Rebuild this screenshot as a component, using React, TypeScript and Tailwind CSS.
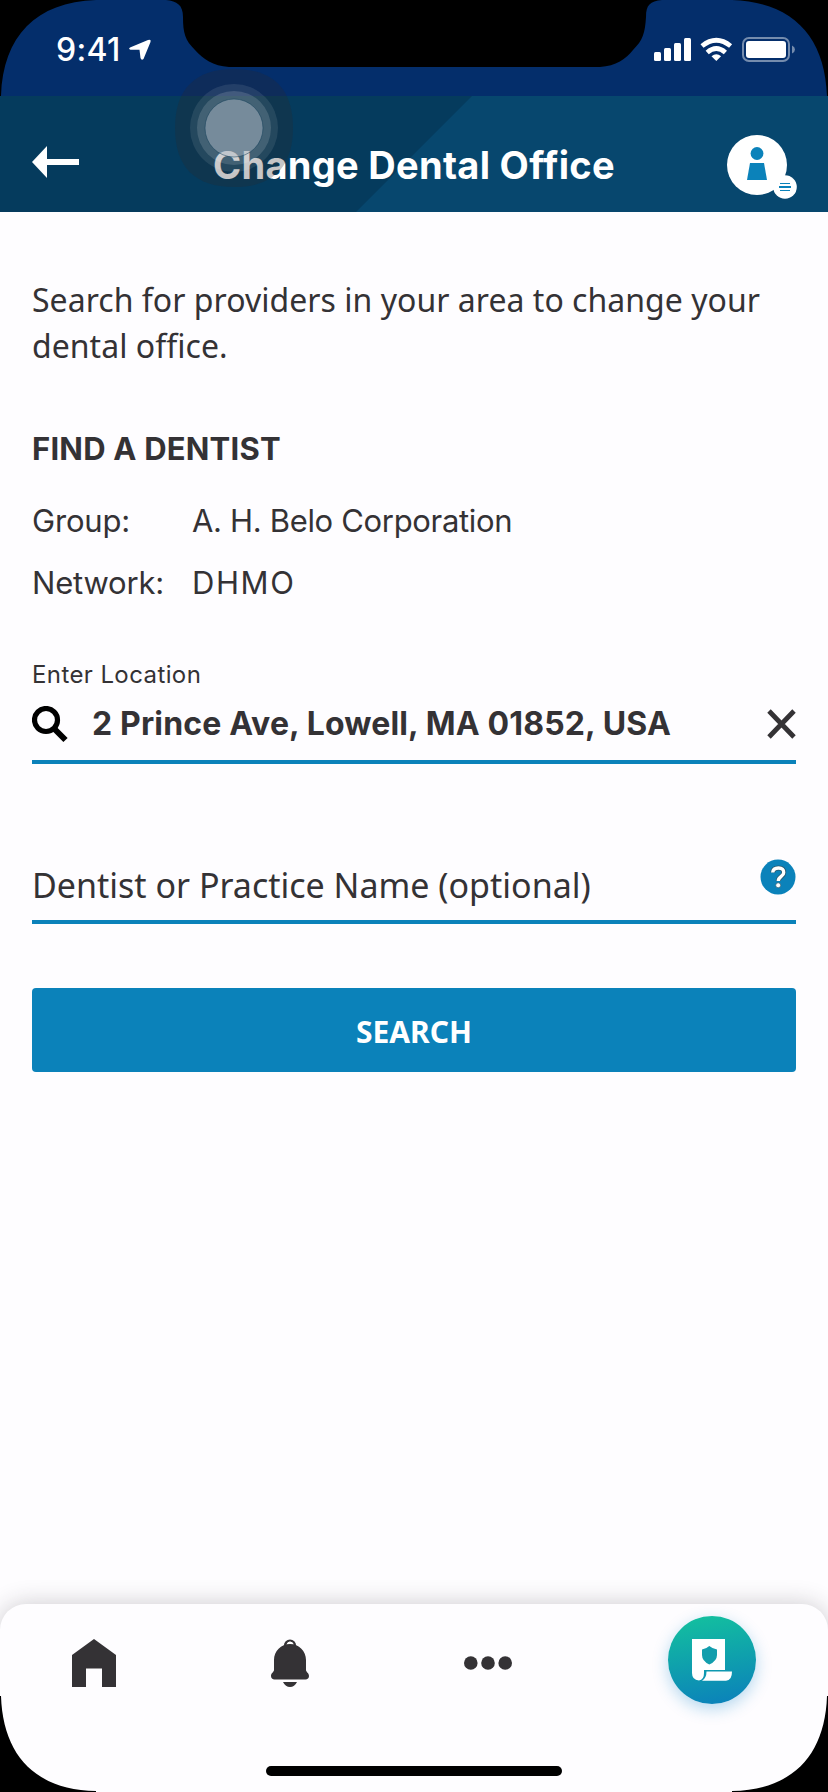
import React from "react";

const circular = "font-[Inter,'Liberation_Sans',sans-serif]";
const noto = "font-['Noto_Sans','Open_Sans',sans-serif]";

function StatusBar() {
  return (
    <div className="relative flex h-24 items-start justify-between bg-[#042e6b] pl-[56px] pr-[33px] text-white">
      <svg className="absolute inset-0" width="828" height="96" viewBox="0 0 828 96" aria-hidden="true">
        <path d="M0 0H96C36 2 3 36 1 96H0Z" fill="#000" />
        <path d="M828 0H732C792 2 825 36 827 96H828Z" fill="#000" />
        <path
          d="M166 0C177 1 183 5 183 17C183 33 185 40 195 50C203 59 213 66 229 67H600C616 66 626 59 633 50C643 40 645 33 646 17C646 5 650 1 662 0Z"
          fill="#000"
        />
      </svg>
      <div className="relative flex pt-[34px]">
        <span className={`${circular} w-[72px] text-[32px] leading-8 font-medium tracking-[0.3px]`}>9:41</span>
        <svg className="mt-[5px]" width="24" height="22" viewBox="0 0 24 22" aria-hidden="true">
          <path d="M2 8.500L20 1Q23.500 0 22.500 3L15.500 20Q13.500 22 12.500 19L11.500 10.700L2.500 10.700Q0 10 2 8.500Z" fill="#fff" />
        </svg>
      </div>
      <div className="relative flex pt-[37px]">
        <svg width="142" height="26" viewBox="0 0 142 26" aria-hidden="true">
          <g fill="#fff">
            <rect x="1" y="15" width="7" height="9" rx="1.500" />
            <rect x="11" y="11" width="7" height="13" rx="1.500" />
            <rect x="21" y="6" width="7" height="18" rx="1.500" />
            <rect x="31" y="1" width="7" height="23" rx="1.500" />
            <path d="M63.300 24L58.500 19.300Q63.300 15.200 68.100 19.300Z" />
          </g>
          <path d="M54.200 15.500Q63.300 7.600 72.400 15.500M49 9Q63.300 -2.500 77.600 9" fill="none" stroke="#fff" strokeWidth="4.800" />
          <rect x="90" y="1" width="46" height="23" rx="6" fill="none" stroke="#fff" strokeOpacity=".45" strokeWidth="2" />
          <rect x="93" y="4" width="40" height="17" rx="3" fill="#fff" />
          <path d="M139 8.500Q142 10 142 12.500T139 16.500Z" fill="#fff" fillOpacity=".45" />
        </svg>
      </div>
    </div>
  );
}

function Header() {
  return (
    <header className="relative flex h-[116px] items-start bg-[#07476e] pr-[31px] pl-8">
      <svg className="absolute inset-0" width="828" height="116" viewBox="0 0 828 116" aria-hidden="true">
        <path d="M0 0H472L356 116H0Z" fill="#053b5d" />
      </svg>
      <svg className="relative mt-[49px]" width="47" height="34" viewBox="0 0 47 34" aria-label="Back">
        <path d="M0 17L15 1V14H47V20H15V33Z" fill="#fff" />
      </svg>
      <h1 className={`${circular} relative mt-[45px] ml-[133px] w-[404px] text-center text-[38px] leading-[48px] font-bold whitespace-nowrap text-white tracking-[0.3px]`}>
        Change Dental Office
      </h1>
      <svg className="relative mt-[38px] ml-auto" width="71" height="66" viewBox="0 0 71 66" aria-label="Profile">
        <circle cx="31" cy="31" r="30" fill="#fff" />
        <circle cx="59" cy="53" r="11.800" fill="#fff" />
        <circle cx="31" cy="19.500" r="6.400" fill="#0b82ba" />
        <path d="M24 29H38L41 46H21Z" fill="#0b82ba" />
        <path d="M53 53H65" stroke="#0b82ba" strokeWidth="2" />
        <path d="M54 49.500H64M54 56.500H64" stroke="#0b82ba" strokeWidth="1" />
      </svg>
      <svg className="absolute left-[174px] top-[-28px]" width="120" height="120" viewBox="0 0 120 120" aria-hidden="true">
        <path d="M60 1C99 1 119 21 119 60S99 119 60 119S1 99 1 60S21 1 60 1Z" fill="#2e2a2c" fillOpacity=".27" />
        <circle cx="60" cy="60" r="44" fill="#fff" fillOpacity=".09" />
        <circle cx="60" cy="60" r="37" fill="#fff" fillOpacity=".14" />
        <circle cx="60" cy="60" r="29" fill="#b0bac8" fillOpacity=".47" stroke="#123e58" strokeOpacity=".5" />
      </svg>
    </header>
  );
}

function Content() {
  return (
    <main className="flex-1 px-8 text-[#343235]">
      <p className={`${noto} pt-[65px] text-[32px] leading-[46px] tracking-[0.03px]`}>
        Search for providers in your area to change your dental office.
      </p>
      <h2 className={`${circular} mt-[57px] text-[31px] leading-[46px] font-bold tracking-[0.2px]`}>FIND A DENTIST</h2>
      <dl className={`${circular} mt-[18px] text-[31px] leading-[40px]`}>
        <div className="flex h-[62px] items-center">
          <dt className="w-[160px] tracking-[-0.2px]">Group:</dt>
          <dd className="tracking-[-0.33px]">A. H. Belo Corporation</dd>
        </div>
        <div className="flex h-[62px] items-center">
          <dt className="w-[160px] tracking-[-0.2px]">Network:</dt>
          <dd className="tracking-[1.6px]">DHMO</dd>
        </div>
      </dl>
      <label className={`${circular} mt-[45px] block text-[24px] leading-8 tracking-[0.4px]`}>Enter Location</label>
      <div className="flex h-[73px] items-center border-b-4 border-[#0b82ba]">
        <svg className="mt-[-2px]" width="36" height="37" viewBox="0 0 36 37" aria-hidden="true">
          <circle cx="14" cy="14" r="11.500" fill="none" stroke="#000" strokeWidth="5.200" />
          <path d="M22 22.500L33.500 34" stroke="#000" strokeWidth="6" />
        </svg>
        <span className={`${circular} mt-[-4px] ml-6 flex-1 text-[32px] leading-10 font-bold whitespace-nowrap tracking-[0.16px]`}>
          2 Prince Ave, Lowell, MA 01852, USA
        </span>
        <svg className="mt-[-3px]" width="29" height="30" viewBox="0 0 29 30" aria-label="Clear">
          <path d="M2 2L27 28M27 2L2 28" stroke="#343235" strokeWidth="4.800" />
        </svg>
      </div>
      <div className="mt-[76px] flex h-[84px] items-center justify-between border-b-4 border-[#0b82ba]">
        <span className={`${noto} mt-[10px] text-[34px] leading-[46px]`}>Dentist or Practice Name (optional)</span>
        <svg className="mt-[-6px]" width="36" height="36" viewBox="0 0 36 36" aria-label="Help">
          <circle cx="18" cy="18" r="17.500" fill="#0b82ba" />
          <path d="M12.700 13.500Q13 9 18.500 9T23.700 13.700C23.700 17.500 18.300 17.500 18.300 22" fill="none" stroke="#28576d" strokeWidth="5" />
          <path d="M12.700 13.500Q13 9 18.500 9T23.700 13.700C23.700 17.500 18.300 17.500 18.300 22" fill="none" stroke="#fff" strokeWidth="3.400" />
          <circle cx="18.200" cy="26.300" r="2.500" fill="#fff" stroke="#28576d" strokeWidth=".7" />
        </svg>
      </div>
      <button className={`${noto} mt-16 flex h-[84px] w-full items-center justify-center rounded bg-[#0b82ba] pt-[2px] text-[30px] font-bold text-white`}>
        SEARCH
      </button>
    </main>
  );
}

function BottomNav() {
  return (
    <nav className="relative h-[188px] rounded-t-[26px] bg-[#fefdff] shadow-[0_0_24px_rgba(40,36,44,0.23)]">
      <div className="flex items-start pt-3 pl-[71px]">
        <svg className="mt-[23px] mr-[153px]" width="46" height="48" viewBox="0 0 46 48" aria-label="Home">
          <path d="M1 16L23 0L45 16V48H31V29.500H15V48H1Z" fill="#343235" />
        </svg>
        <svg className="mt-[23px] mr-[154px]" width="40" height="48" viewBox="0 0 40 48" aria-label="Notifications">
          <circle cx="20" cy="6.500" r="4.900" fill="none" stroke="#343235" strokeWidth="2.400" />
          <path d="M20 5C11 5 4 12 4 21V31C4 33 1 34 1 37C1 39 2.500 40.500 4.500 40.500H35.500C37.500 40.500 39 39 39 37C39 34 36 33 36 31V21C36 12 29 5 20 5Z" fill="#343235" />
          <path d="M17 5Q17.500 2.500 20 2.500T23 5Z" fill="#fff" />
          <path d="M13 43H27Q24.500 48 20 48T13 43Z" fill="#343235" />
        </svg>
        <svg className="mt-[40px] mr-[156px]" width="48" height="14" viewBox="0 0 48 14" fill="#343235" aria-label="More">
          <circle cx="6.800" cy="7" r="6.800" />
          <circle cx="24" cy="7" r="6.800" />
          <circle cx="41.200" cy="7" r="6.800" />
        </svg>
        <div className="h-[88px] w-[88px] rounded-full bg-[linear-gradient(170deg,#13bf9f_5%,#0b82ba_95%)] shadow-[0_5px_16px_rgba(11,130,200,0.3)]">
          <svg width="88" height="88" viewBox="0 0 88 88" aria-label="Benefits">
            <path d="M24 23H57V54H36V57Q36 64 31 64.500Q24 64 24 57Z" fill="#fff" />
            <path d="M41.300 30Q45 33 49 33.500V39Q49 45 41.300 48.500Q34 45 34 39V33.500Q38 33 41.300 30Z" fill="#129ead" />
            <path d="M38.500 55.500H64Q64 64.500 58 64.800H34Q38.500 62 38.500 55.500Z" fill="#fff" />
          </svg>
        </div>
      </div>
      <div className="mx-auto mt-[62px] h-[10px] w-[296px] rounded-full bg-black" />
      <svg className="absolute bottom-0 left-0" width="96" height="96" viewBox="0 0 96 96" aria-hidden="true">
        <path d="M0 0H1C3 60 36 94 96 95V96H0Z" fill="#000" />
      </svg>
      <svg className="absolute right-0 bottom-0" width="96" height="96" viewBox="0 0 96 96" aria-hidden="true">
        <path d="M96 0H95C93 60 60 94 0 95V96H96Z" fill="#000" />
      </svg>
    </nav>
  );
}

export default function App() {
  return (
    <div className="flex h-[1792px] w-[828px] flex-col overflow-hidden bg-[#fefdff]">
      <StatusBar />
      <Header />
      <Content />
      <BottomNav />
    </div>
  );
}
